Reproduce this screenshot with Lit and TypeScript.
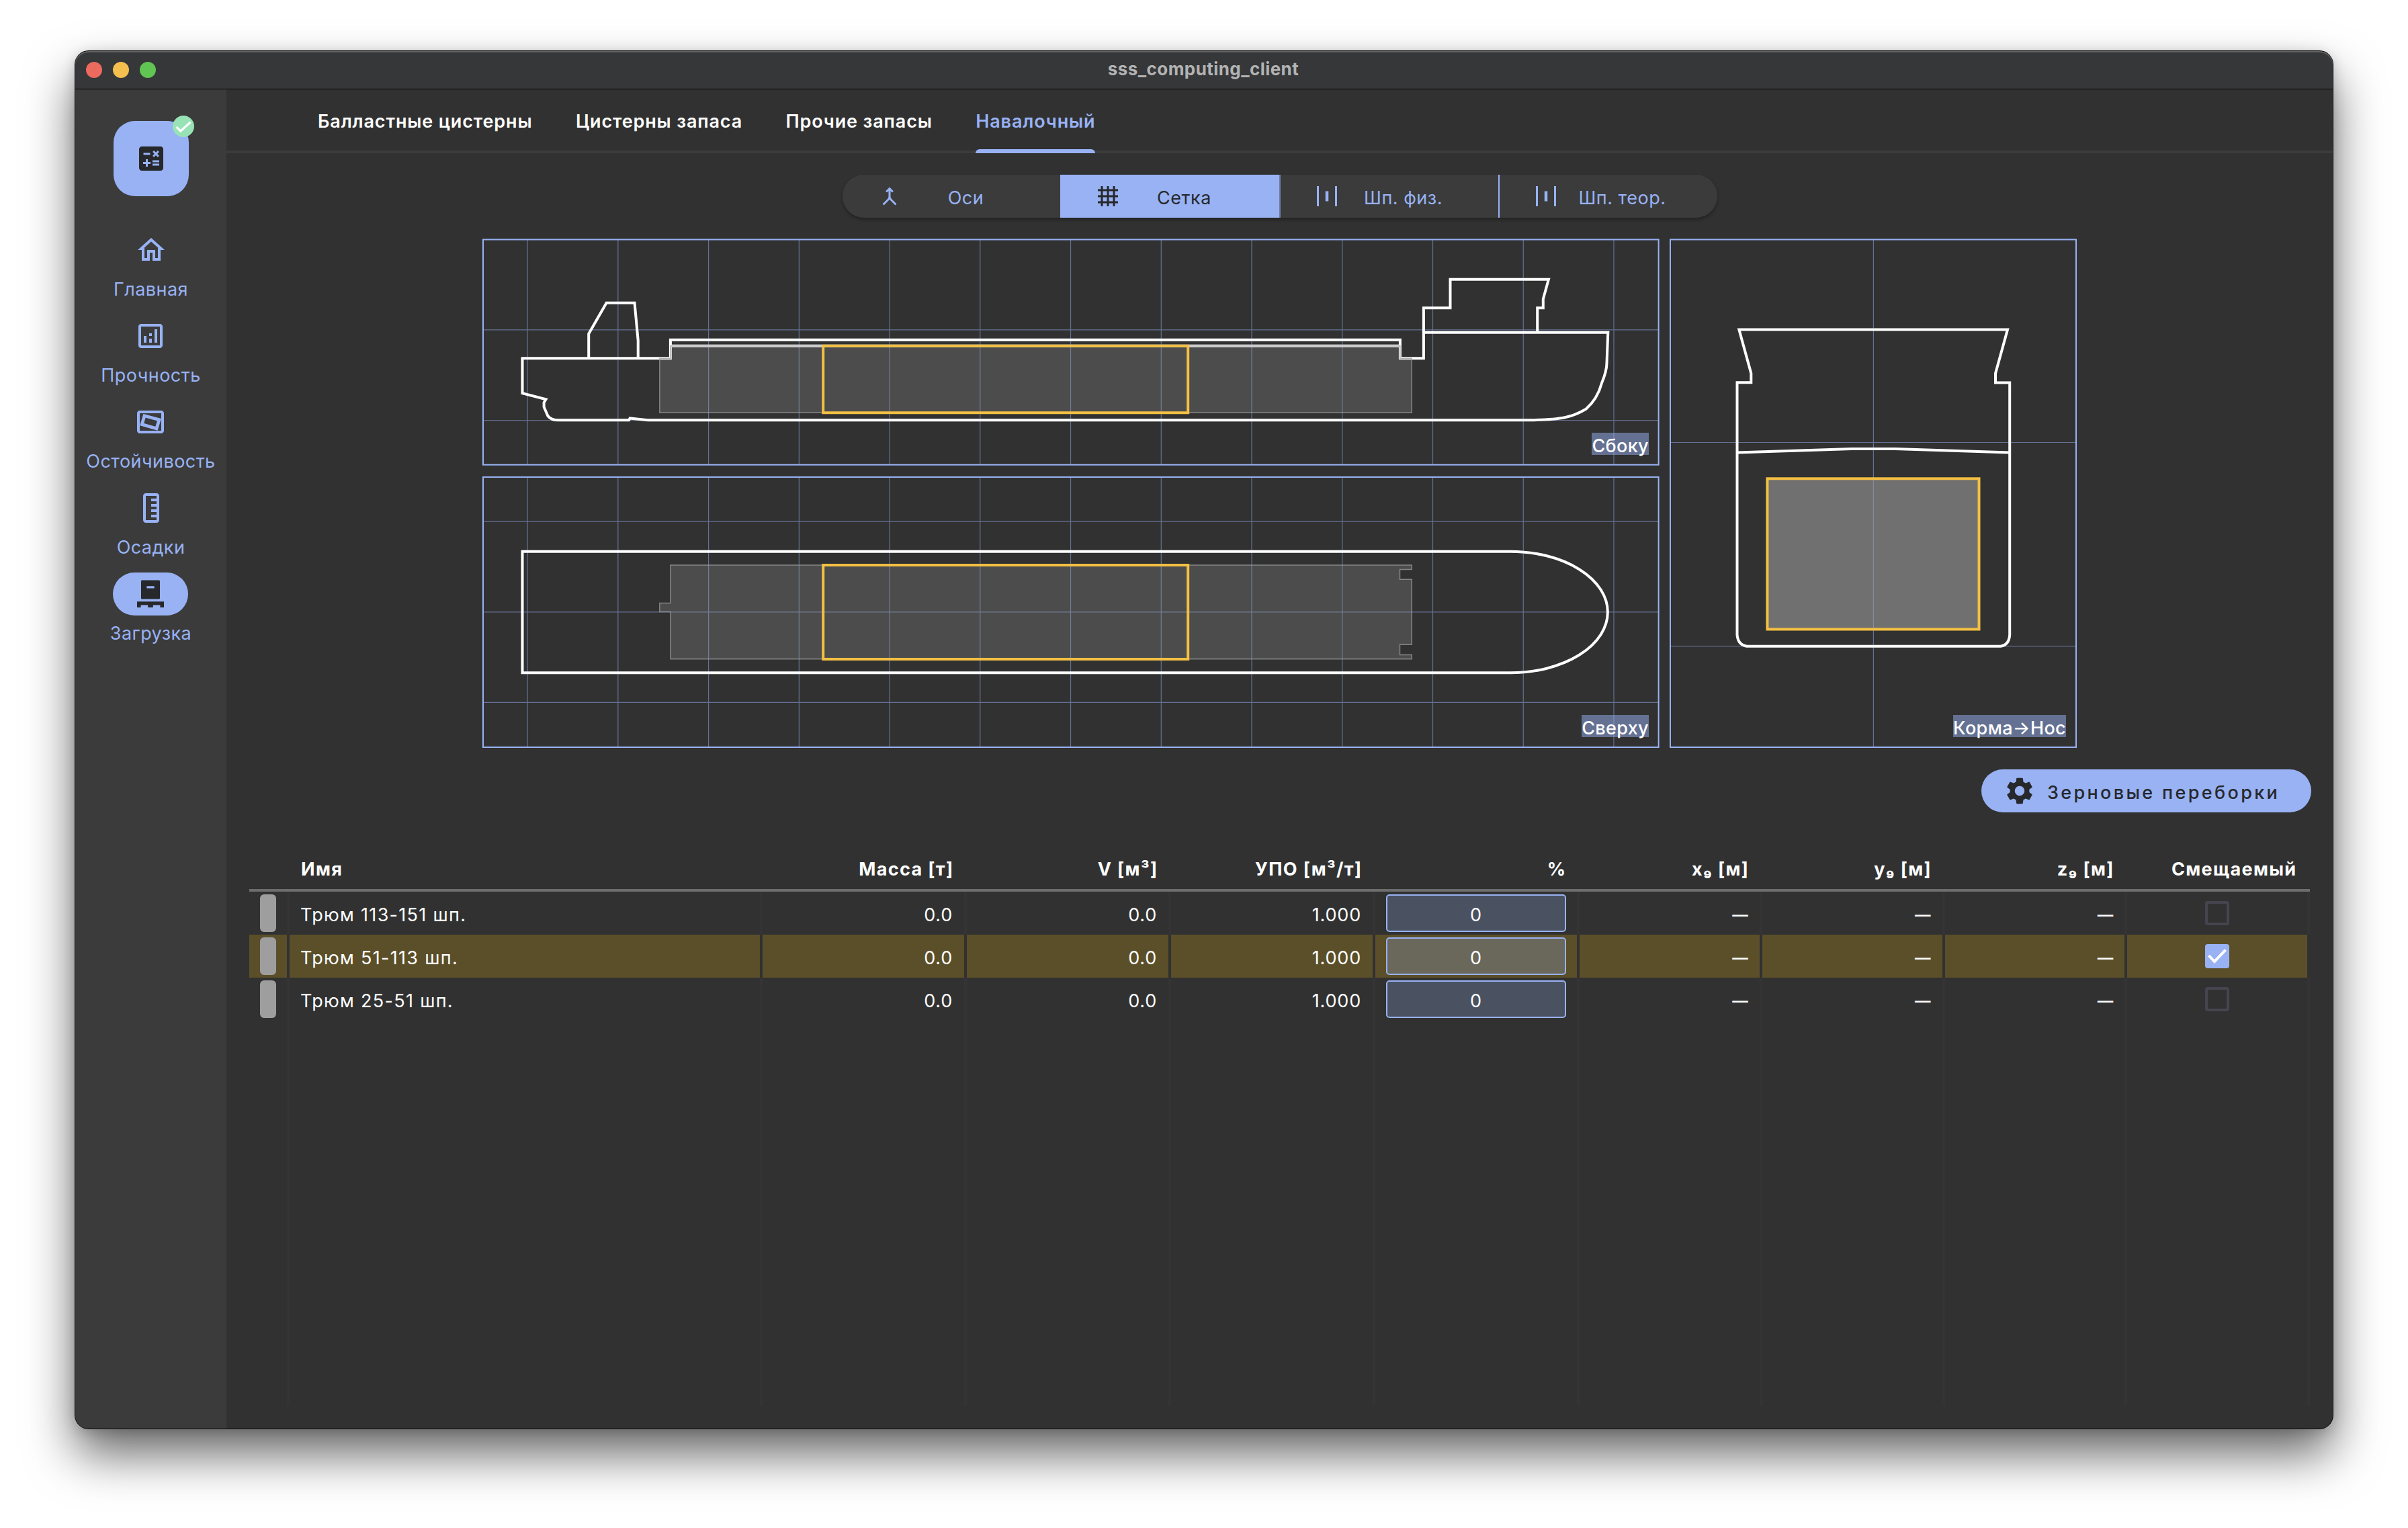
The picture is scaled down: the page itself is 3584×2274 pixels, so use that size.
import { LitElement, html, svg, css } from "lit";
import { customElement, property } from "lit/decorators.js";
import { classMap } from "lit/directives/class-map.js";

const ICONS: Record<string, unknown> = {
  calculate: svg`<path d="M19 3H5c-1.1 0-2 .9-2 2v14c0 1.1.9 2 2 2h14c1.1 0 2-.9 2-2V5c0-1.1-.9-2-2-2zm-5.97 4.06L14.09 6l1.41 1.41L16.91 6l1.06 1.06-1.41 1.41 1.41 1.41-1.06 1.06-1.41-1.4-1.41 1.41-1.06-1.06 1.41-1.41-1.41-1.42zm-6.78.66h5v1.5h-5v-1.5zM11.5 16h-2v2H8v-2H6v-1.5h2v-2h1.5v2h2V16zm6.5 1.25h-5v-1.5h5v1.5zm0-2.5h-5v-1.5h5v1.5z"/>`,
  home: svg`<path d="M12 5.69l5 4.5V18h-2v-6H9v6H7v-7.81l5-4.5M12 3L2 12h3v8h6v-6h2v6h6v-8h3L12 3z"/>`,
  analytics: svg`<path d="M19 3H5c-1.1 0-2 .9-2 2v14c0 1.1.9 2 2 2h14c1.1 0 2-.9 2-2V5c0-1.1-.9-2-2-2zm0 16H5V5h14v14zM7 12h2v5H7v-5zm8-5h2v10h-2V7zm-4 7h2v3h-2v-3zm0-4h2v2h-2v-2z"/>`,
  stability: svg`<path fill-rule="evenodd" d="M4 3.5h16c1.1 0 2 .9 2 2v13c0 1.1-.9 2-2 2H4c-1.1 0-2-.9-2-2v-13c0-1.1.9-2 2-2zm0 2v13h16v-13H4z"/><path d="M7.5 7.4L18.5 10.3 16.5 16.9 5.6 13.8z" fill="none" stroke="currentColor" stroke-width="2.400"/>`,
  ruler: svg`<path transform="rotate(90 12 12)" d="M21 6H3c-1.1 0-2 .9-2 2v8c0 1.1.9 2 2 2h18c1.1 0 2-.9 2-2V8c0-1.1-.9-2-2-2zm0 10H3V8h2v4h2V8h2v4h2V8h2v4h2V8h2v4h2V8h2v8z"/>`,
  pallet: svg`<path fill-rule="evenodd" d="M5.8 1.800h12.4c.5 0 .8.3.8.8v12.400c0 .5-.3.8-.8.8H5.8c-.5 0-.8-.3-.8-.8V2.600c0-.5.3-.8.8-.8zM9.200 6.100v1.700h5.600V6.100H9.200zM2 17.600h20V22h-2.800V20.300h-5.300V22h-3.800V20.300H4.800V22H2z"/>`,
  merge: svg`<path d="M6.41 21 5 19.59l4.83-4.83c.75-.75 1.17-1.77 1.17-2.83v-5.1L9.41 8.41 8 7l4-4 4 4-1.41 1.41L13 6.830v5.1c0 1.06.42 2.080 1.17 2.830L19 19.590 17.590 21 12 15.410z"/>`,
  grid: svg`<path d="M22 7V5h-3V2h-2v3h-4V2h-2v3H7V2H5v3H2v2h3v4H2v2h3v4H2v2h3v3h2v-3h4v3h2v-3h4v3h2v-3h3v-2h-3v-4h3v-2h-3V7h3zM7 7h4v4H7V7zm0 10v-4h4v4H7zm10 0h-4v-4h4v4zm0-6h-4V7h4v4z"/>`,
  frames: svg`<path d="M4 22H2V2h2v20zM22 2h-2v20h2V2zm-8.500 5h-3v10h3V7z"/>`,
  settings: svg`<path d="M19.14 12.94c.04-.3.06-.61.06-.94 0-.32-.02-.64-.07-.94l2.03-1.58c.18-.14.23-.41.12-.61l-1.92-3.32c-.12-.22-.37-.29-.59-.22l-2.39.96c-.5-.38-1.03-.7-1.62-.94l-.36-2.54c-.04-.24-.24-.41-.48-.41h-3.840c-.24 0-.43.17-.47.41l-.36 2.540c-.59.24-1.130.57-1.620.94l-2.390-.96c-.22-.08-.47 0-.59.22L2.740 8.870c-.12.21-.08.47.12.61l2.030 1.580c-.05.3-.09.63-.09.94s.02.64.07.94l-2.030 1.580c-.18.14-.23.41-.12.61l1.920 3.320c.12.22.37.29.59.22l2.390-.96c.5.38 1.030.7 1.620.94l.36 2.540c.05.24.24.41.48.41h3.840c.24 0 .44-.17.47-.41l.36-2.540c.59-.24 1.130-.56 1.620-.94l2.390.96c.22.08.47 0 .59-.22l1.920-3.320c.12-.22.07-.47-.12-.61l-2.010-1.580zM12 15.600c-1.980 0-3.600-1.620-3.600-3.600s1.620-3.600 3.600-3.600 3.600 1.620 3.600 3.600-1.620 3.600-3.600 3.600z"/>`,
};

@customElement("ui-icon")
class UiIcon extends LitElement {
  @property() name = "home";
  static styles = css`
    :host { display: block; width: 48px; height: 48px; flex: none; }
    .glyph { display: block; width: 100%; height: 100%; fill: currentColor; }
  `;
  render() {
    return html`<svg class="glyph" viewBox="0 0 24 24">${ICONS[this.name]}</svg>`;
  }
}

@customElement("nav-rail")
class NavRail extends LitElement {
  static items = [
    ["home", "Главная"],
    ["analytics", "Прочность"],
    ["stability", "Остойчивость"],
    ["ruler", "Осадки"],
    ["pallet", "Загрузка"],
  ];
  static styles = css`
    :host { display: flex; flex-direction: column; align-items: center; width: 225px; flex: none;
      box-sizing: border-box; padding-top: 47px; background: #3b3b3b; color: #98b2f4; }
    .fab { position: relative; display: flex; align-items: center; justify-content: center; width: 112px;
      height: 112px; border-radius: 32px; background: #98b2f4; color: #26282b; margin-bottom: 48px; }
    .badge { position: absolute; top: -8px; right: -8px; width: 32px; height: 32px; }
    .item { display: flex; flex-direction: column; align-items: center; height: 128px; }
    .pill { display: flex; align-items: center; justify-content: center; width: 112px; height: 64px; border-radius: 32px; }
    .on { background: #98b2f4; color: #26282b; }
    .label { margin-top: 9px; font-size: 27px; line-height: 36px; letter-spacing: 0.450px; white-space: nowrap; }
  `;
  render() {
    return html`
      <div class="fab">
        <ui-icon name="calculate"></ui-icon>
        <svg class="badge" viewBox="0 0 32 32">
          <circle cx="16" cy="16" r="16" fill="#98e3b6" />
          <path d="M5.500 16.800l6.300 6.200L26.600 9.800" fill="none" stroke="#fff" stroke-width="3.200" />
        </svg>
      </div>
      ${NavRail.items.map(
        ([icon, label], i) => html`<div class="item">
          <div class=${classMap({ pill: true, on: i === 4 })}><ui-icon name=${icon}></ui-icon></div>
          <div class="label">${label}</div>
        </div>`
      )}
    `;
  }
}

@customElement("ship-views")
class ShipViews extends LitElement {
  static styles = css`
    :host { display: flex; gap: 15px; justify-content: center; margin-top: 31px; }
    .column { display: flex; flex-direction: column; gap: 16px; }
    .view { position: relative; }
    .canvas { display: block; fill: none; }
    .edge { stroke: #98b2f4; stroke-width: 2; }
    .mesh { stroke: #98b2f4; stroke-width: 1.200; opacity: 0.5; }
    .hull { stroke: #fff; stroke-width: 4; }
    .hold { fill: rgba(158, 158, 158, 0.25); stroke: #9e9e9e; stroke-opacity: 0.75; stroke-width: 1.500; }
    .stack { fill: rgba(158, 158, 158, 0.25); }
    .picked { fill: rgba(158, 158, 158, 0.25); stroke: #f4c043; stroke-width: 4; }
    .caption { position: absolute; right: 16px; bottom: 16px; height: 33px; line-height: 39px; font-size: 27px;
      font-weight: 500; color: #fff; background: rgba(152, 178, 244, 0.5); white-space: nowrap; letter-spacing: 0.350px; }
  `;

  private mesh(xs: number[], ys: number[], x0: number, x1: number, y0: number, y1: number) {
    const d = xs.map((x) => `M${x} ${y0}V${y1}`).join("") + ys.map((y) => `M${x0} ${y}H${x1}`).join("");
    return svg`<path class="mesh" d=${d} />`;
  }

  render() {
    const stations = Array.from({ length: 13 }, (_, i) => 785.1 + i * 134.74);
    return html`
      <div class="column">
        <div class="view">
          <svg class="canvas" width="1752" height="338" viewBox="718 355 1752 338">
            ${this.mesh(stations, [490.8, 625.5], 719, 2468.6, 356, 692)}
            <path class="hull" d="M777.500 533.300V585.300L812.500 594.300 809.600 599V605.700L815.400 619Q820 625.300 831 625.300H936L937.600 622.500 964 625.300H2277Q2313 624.700 2329 621.300 2345 618 2360.500 608.700C2374 597 2380 585 2384 570Q2391.500 552 2391.500 540L2393.300 494.700H2118.900V533.300H2083.900V505.700H997.900V533.300Z"/>
            <path class="hull" d="M997.900 514.700H2083.900M2118.900 494.700V458.300H2158.500V415.700H2304.900L2296.800 445V458.300H2288.200V494.700M876.200 533.300V496.700L902.600 450.700H944.500L949.700 506.700V533.300"/>
            <path class="hold" d="M981.800 533.300H997.900V514.700H1225V614.300H981.800Z"/>
            <path class="hold" d="M1768 514.700H2083.900V533.300H2101.200V614.300H1768Z"/>
            <path class="picked" d="M1225.200 514.700H1768.200V614.300H1225.200Z"/>
            <rect class="edge" x="719" y="356.500" width="1749.600" height="335.200"/>
          </svg>
          <span class="caption">Сбоку</span>
        </div>
        <div class="view">
          <svg class="canvas" width="1752" height="404" viewBox="718 709 1752 404">
            ${this.mesh(stations, [776.2, 910.8, 1045.4], 719, 2468.6, 710, 1112)}
            <path class="hull" d="M777.500 820.700H2248A145 90.300 0 0 1 2248 1001.300H777.500Z"/>
            <path class="hold" d="M997.900 841H1225V980.800H997.900V910.600H981.800V897.400H997.900Z"/>
            <path class="hold" d="M1768 841H2101.200V847.400H2083.500V862.300H2101.200V959.200H2083.500V974.400H2101.200V980.800H1768Z"/>
            <path class="picked" d="M1225.200 841H1768.200V980.900H1225.200Z"/>
            <rect class="edge" x="719" y="710" width="1749.600" height="402"/>
          </svg>
          <span class="caption">Сверху</span>
        </div>
      </div>
      <div class="view">
        <svg class="canvas" width="606" height="758" viewBox="2485 355 606 758">
          ${this.mesh([2788.4], [658.5, 961.6], 2486, 3090, 356, 1112)}
          <rect class="stack" x="2630.400" y="712.300" width="315.100" height="224.200"/>
          <rect class="stack" x="2630.400" y="712.300" width="315.100" height="224.200"/>
          <path class="hull" d="M2588.400 490.600L2606.300 555.600V569.300H2585.500V945Q2587 960 2599.800 961.700H2977.800Q2990 960 2991.200 945V569.500H2970V555.600L2988 490.600Z"/>
          <path class="hull" d="M2585.500 673.500L2755.700 668H2821L2991.200 673.500"/>
          <rect class="picked" x="2630.400" y="712.300" width="315.100" height="224.200"/>
          <rect class="edge" x="2486" y="356.500" width="604" height="755.500"/>
        </svg>
        <span class="caption">Корма→Нос</span>
      </div>
    `;
  }
}

interface Hold {
  name: string;
  picked: boolean;
}

@customElement("hold-table")
class HoldTable extends LitElement {
  static heads = ["", "Имя", "Масса [т]", "V [м³]", "УПО [м³/т]", "%", "x₉ [м]", "y₉ [м]", "z₉ [м]", "Смещаемый"];
  static holds: Hold[] = [
    { name: "Трюм 113-151 шп.", picked: false },
    { name: "Трюм 51-113 шп.", picked: true },
    { name: "Трюм 25-51 шп.", picked: false },
  ];
  static styles = css`
    :host { display: flex; flex-direction: column; color: #fff; font-size: 27px; }
    .row { display: grid; grid-template-columns: 60px 704px repeat(4, 304px) repeat(4, 1fr); height: 64px; }
    .head { height: 114px; align-items: end; border-bottom: 4px solid #6d6d6d; font-weight: 700; }
    .title { padding: 0 19.500px 0 17px; line-height: 59px; text-align: right; white-space: nowrap; letter-spacing: 1.350px; }
    .title.left { text-align: left; }
    .cell { display: flex; align-items: center; justify-content: flex-end; box-sizing: border-box; padding: 0 17px 0 16px;
      border-right: 4px solid #343434; letter-spacing: 0.800px; }
    .cell.left { justify-content: flex-start; letter-spacing: 1.300px; }
    .cell.center { justify-content: center; padding: 0; }
    .cell.field { padding: 4px 16px; }
    .picked .cell { background: #5b4f29; background-clip: padding-box; border-right-color: #313131; }
    .text { padding-top: 4px; white-space: nowrap; }
    .dash { font-size: 23.500px; font-weight: 600; letter-spacing: 0; }
    .marker { width: 24px; height: 56px; border-radius: 6px; background: #9e9e9e; }
    .input { width: 100%; height: 56px; box-sizing: border-box; border: 2px solid #98b2f4; border-radius: 5px;
      background: rgba(152, 178, 244, 0.25); display: flex; align-items: center; justify-content: center; }
    .box { width: 36px; height: 36px; box-sizing: border-box; border: 4px solid #46444f; border-radius: 4px; }
    .tick { display: block; width: 36px; height: 36px; border-radius: 4px; background: #98b2f4; }
    .filler { flex: 1; height: auto; }
  `;
  render() {
    return html`
      <div class="row head">
        ${HoldTable.heads.map((h, i) => html`<div class=${classMap({ title: true, left: i < 2 })}>${h}</div>`)}
      </div>
      ${HoldTable.holds.map(
        (h) => html`<div class=${classMap({ row: true, picked: h.picked })}>
          <div class="cell center"><div class="marker"></div></div>
          <div class="cell left"><span class="text">${h.name}</span></div>
          ${["0.0", "0.0", "1.000"].map((v) => html`<div class="cell"><span class="text">${v}</span></div>`)}
          <div class="cell field"><div class="input"><span class="text">0</span></div></div>
          ${[0, 1, 2].map(() => html`<div class="cell"><span class="text dash">—</span></div>`)}
          <div class="cell center">
            ${h.picked
              ? html`<svg class="tick" viewBox="0 0 36 36">
                  <path d="M5.500 17L14 26 30.500 8.700" fill="none" stroke="#fff" stroke-width="4" />
                </svg>`
              : html`<div class="box"></div>`}
          </div>
        </div>`
      )}
      <div class="row filler">
        ${HoldTable.heads.map(() => html`<div class="cell"></div>`)}
      </div>
    `;
  }
}

@customElement("app-root")
class AppRoot extends LitElement {
  static tabs = ["Балластные цистерны", "Цистерны запаса", "Прочие запасы", "Навалочный"];
  static modes = [
    ["merge", "Оси"],
    ["grid", "Сетка"],
    ["frames", "Шп. физ."],
    ["frames", "Шп. теор."],
  ];
  static styles = css`
    :host { display: block; box-sizing: border-box; width: 3584px; height: 2274px; overflow: hidden;
      padding: 76px 0 0 112px; background: #fff; font-family: Inter, "Noto Sans", sans-serif; }
    .window { display: flex; flex-direction: column; width: 3360px; height: 2050px; border-radius: 20px; background: #313131;
      box-shadow: 0 0 0 1px #0c0c0c, 0 38px 72px rgba(0, 0, 0, 0.6), 0 4px 20px rgba(0, 0, 0, 0.18); }
    .titlebar { display: grid; grid-template-columns: 1fr auto 1fr; align-items: center; height: 56px; padding: 0 18px 0 16px;
      border-bottom: 1px solid #000; border-radius: 20px 20px 0 0; background: #363738; box-shadow: inset 0 2px 0 #5d5f60; }
    .lights { display: flex; gap: 16px; }
    .light { width: 24px; height: 24px; border-radius: 50%; }
    .red { background: #ed6a5e; }
    .amber { background: #f5bf4f; }
    .green { background: #61c554; }
    .caption { color: #b2b3b4; font-size: 26px; font-weight: 700; line-height: 52px; height: 54px; letter-spacing: 0.430px; }
    .body { display: flex; flex: 1; min-height: 0; overflow: hidden; border-radius: 0 0 20px 20px; }
    .main { display: flex; flex-direction: column; flex: 1; min-width: 0; }
    .tabs { display: flex; gap: 64.500px; height: 95px; box-sizing: border-box; padding-left: 136px; border-bottom: 4px solid #3b3b3b; }
    .tab { position: relative; line-height: 95px; font-size: 27px; font-weight: 600; color: #fff; white-space: nowrap; letter-spacing: 0.860px; }
    .tab.on { color: #98b2f4; }
    .tab.on::after { content: ""; position: absolute; left: 0; right: 0; bottom: -4px; height: 6px; border-radius: 6px 6px 0 0; background: #98b2f4; }
    .content { display: flex; flex-direction: column; flex: 1; padding: 32px 34px 34px; }
    .modes { display: flex; height: 64px; border-radius: 32px; overflow: hidden; background: #3b3b3b; }
    .shade { align-self: center; border-radius: 32px; box-shadow: 0 3px 5px rgba(0, 0, 0, 0.3); }
    .mode { display: flex; align-items: center; width: 324px; box-sizing: border-box; padding-left: 52px; color: #98b2f4; font-size: 27px; }
    .mode + .mode { width: 326px; padding-left: 51px; border-left: 2px solid #98b2f4; }
    .mode.on { background: #98b2f4; color: #26282b; }
    .mode.on + .mode { border-left-color: #6c7ba1; }
    .mode-icon { width: 36px; height: 36px; }
    .mode-label { width: 160px; margin-left: 16px; padding-top: 4px; text-align: center; letter-spacing: 0.500px; }
    .action { display: flex; align-items: center; align-self: flex-end; box-sizing: border-box; width: 491px; height: 64px; margin: 32px -2px 0 0;
      padding-left: 33px; gap: 17px; border-radius: 32px; background: #98b2f4; color: #26282b; }
    .action-label { padding-top: 4px; font-size: 27px; font-weight: 500; letter-spacing: 3.350px; white-space: nowrap; }
    .table { flex: 1; }
  `;
  render() {
    return html`
      <div class="window">
        <div class="titlebar">
          <div class="lights"><i class="light red"></i><i class="light amber"></i><i class="light green"></i></div>
          <div class="caption">sss_computing_client</div>
        </div>
        <div class="body">
          <nav-rail></nav-rail>
          <div class="main">
            <div class="tabs">
              ${AppRoot.tabs.map((t, i) => html`<div class=${classMap({ tab: true, on: i === 3 })}>${t}</div>`)}
            </div>
            <div class="content">
              <div class="shade">
                <div class="modes">
                  ${AppRoot.modes.map(
                    ([icon, label], i) => html`<div class=${classMap({ mode: true, on: i === 1 })}>
                      <ui-icon class="mode-icon" name=${icon}></ui-icon>
                      <span class="mode-label">${label}</span>
                    </div>`
                  )}
                </div>
              </div>
              <ship-views></ship-views>
              <div class="action">
                <ui-icon name="settings"></ui-icon>
                <span class="action-label">Зерновые переборки</span>
              </div>
              <hold-table class="table"></hold-table>
            </div>
          </div>
        </div>
      </div>
    `;
  }
}
